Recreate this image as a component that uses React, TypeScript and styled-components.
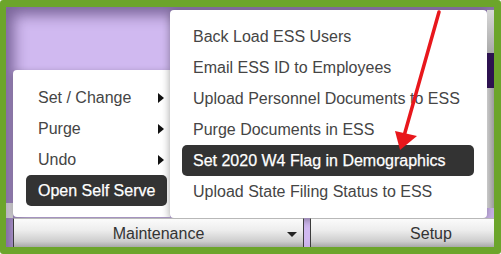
import React from "react"
import styled, { createGlobalStyle } from "styled-components"

const GlobalStyle = createGlobalStyle`
  html, body {
    margin: 0;
    padding: 0;
    background: #ffffff;
  }
  body {
    font-family: "Liberation Sans", Arial, sans-serif;
  }
`

const Frame = styled.div`
  position: relative;
  width: 501px;
  height: 254px;
  box-sizing: border-box;
  border: 7px solid #6ca52b;
  border-left-width: 6px;
  border-radius: 3px;
  background: #d0b9f0;
  box-shadow: inset 8px 8px 14px rgba(40, 20, 70, 0.5);
  overflow: hidden;
  display: flex;
  flex-direction: column;
`

const Workspace = styled.div`
  display: flex;
  height: 211px;
  flex: 0 0 auto;
`

const EdgeStrip = styled.div`
  width: 7px;
  flex: 0 0 auto;
  display: flex;
  flex-direction: column;
  justify-content: flex-end;
`

const EdgeNub = styled.div`
  height: 15px;
  background: linear-gradient(90deg, #b9b2c2, #d6d6d6);
`

const LeftMenu = styled.div`
  align-self: flex-end;
  width: 157px;
  height: 147px;
  margin-bottom: 1px;
  box-sizing: border-box;
  padding: 12px 3px 11px 13px;
  background: #ffffff;
  border-radius: 4px 0 0 4px;
  box-shadow: 0 2px 6px rgba(0, 0, 0, 0.3);
  display: flex;
  flex-direction: column;
`

const RightMenu = styled.div`
  width: 317px;
  height: 208px;
  margin-top: 3px;
  box-sizing: border-box;
  padding: 11px 13px 11px 12px;
  background: #ffffff;
  border-radius: 4px;
  box-shadow: 0 2px 9px rgba(0, 0, 0, 0.38);
  display: flex;
  flex-direction: column;
`

const MenuItem = styled.div<{ $active?: boolean; $inset: number }>`
  height: 31px;
  flex: 0 0 31px;
  box-sizing: border-box;
  padding: 0 2px 0 ${(p) => p.$inset}px;
  display: flex;
  align-items: center;
  justify-content: space-between;
  border-radius: 5px;
  font-size: 16px;
  white-space: nowrap;
  color: ${(p) => (p.$active ? "#ffffff" : "#454545")};
  background: ${(p) => (p.$active ? "#333333" : "transparent")};
  -webkit-text-stroke: ${(p) => (p.$active ? "0.25px #ffffff" : "0")};
`

const SubArrow = styled.span`
  width: 0;
  height: 0;
  border-top: 5px solid transparent;
  border-bottom: 5px solid transparent;
  border-left: 6px solid #111111;
  margin-right: 1px;
`

const ScrollStrip = styled.div`
  width: 7px;
  flex: 0 0 auto;
  display: flex;
  flex-direction: column;
  padding-top: 3px;
`

const ScrollPart = styled.div<{ $h: number; $tone: "light" | "dark" | "track" }>`
  height: ${(p) => p.$h}px;
  flex: 0 0 auto;
  background: ${(p) =>
    p.$tone === "dark"
      ? "#2d1250"
      : p.$tone === "light"
      ? "linear-gradient(180deg, #d8d8d8, #a9a9a9)"
      : "linear-gradient(90deg, #c8c8c8, #9c9c9c)"};
`

const TabBar = styled.div`
  display: flex;
  height: 29px;
  flex: 0 0 auto;
  padding-left: 7px;
`

const Tab = styled.div<{ $width: number }>`
  width: ${(p) => p.$width}px;
  flex: 0 0 auto;
  box-sizing: border-box;
  border: 1px solid #3c3c3c;
  border-top-color: #b8b8b8;
  border-bottom: none;
  background: linear-gradient(180deg, #fbfbfb 0%, #ededed 40%, #cdcdcd 80%, #a8a8a8 100%);
  display: grid;
  grid-template-columns: 1fr auto 1fr;
  align-items: center;
  font-size: 16px;
  color: #333333;
  & + & {
    margin-left: 6px;
  }
`

const TabLabel = styled.span`
  grid-column: 2;
  padding-top: 2px;
`

const Caret = styled.span`
  grid-column: 3;
  justify-self: end;
  margin-right: 6px;
  margin-top: 3px;
  width: 0;
  height: 0;
  border-left: 5px solid transparent;
  border-right: 5px solid transparent;
  border-top: 5px solid #222222;
`

const ArrowLayer = styled.svg`
  position: absolute;
  top: -7px;
  left: -6px;
  pointer-events: none;
`

const leftItems = ["Set / Change", "Purge", "Undo", "Open Self Serve"]

const rightItems = [
  "Back Load ESS Users",
  "Email ESS ID to Employees",
  "Upload Personnel Documents to ESS",
  "Purge Documents in ESS",
  "Set 2020 W4 Flag in Demographics",
  "Upload State Filing Status to ESS",
]

const App = () => {
  return (
    <>
      <GlobalStyle />
      <Frame>
        <Workspace>
          <EdgeStrip>
            <EdgeNub />
          </EdgeStrip>
          <LeftMenu>
            {leftItems.map((label, i) => (
              <MenuItem key={label} $inset={12} $active={i === 3}>
                <span>{label}</span>
                {i < 3 && <SubArrow />}
              </MenuItem>
            ))}
          </LeftMenu>
          <RightMenu>
            {rightItems.map((label, i) => (
              <MenuItem key={label} $inset={11} $active={i === 4}>
                <span>{label}</span>
              </MenuItem>
            ))}
          </RightMenu>
          <ScrollStrip>
            <ScrollPart $h={43} $tone="light" />
            <ScrollPart $h={35} $tone="dark" />
            <ScrollPart $h={120} $tone="track" />
          </ScrollStrip>
        </Workspace>
        <TabBar>
          <Tab $width={291}>
            <TabLabel>Maintenance</TabLabel>
            <Caret />
          </Tab>
          <Tab $width={242}>
            <TabLabel>Setup</TabLabel>
          </Tab>
        </TabBar>
        <ArrowLayer width="501" height="254" viewBox="0 0 501 254">
          <line x1="439" y1="12" x2="404" y2="136" stroke="#e8171c" strokeWidth="3.5" strokeLinecap="round" />
          <polygon points="400,150 395,131 417,136" fill="#e8171c" />
        </ArrowLayer>
      </Frame>
    </>
  )
}

export default App
